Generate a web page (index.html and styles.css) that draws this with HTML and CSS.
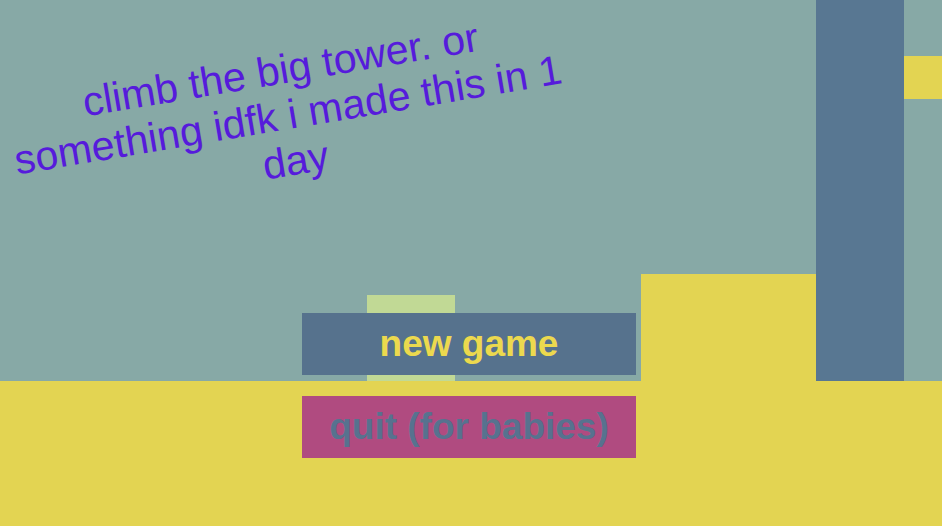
FILE: index.html
```html
<!DOCTYPE html>
<html lang="en">
<head>
    <meta charset="UTF-8">
    <meta name="viewport" content="width=device-width, initial-scale=1.0">
    <title>climb the big tower</title>
    <link rel="stylesheet" href="styles.css">
</head>
<body>
    <div class="scene">
        <!-- level blocks -->
        <div class="block floor"></div>
        <div class="block crate"></div>
        <div class="block step"></div>
        <div class="block tower"></div>
        <div class="block ledge"></div>

        <h1 class="title">climb the big tower. or something idfk i made this in 1 day</h1>

        <div class="menu">
            <button class="btn btn-new">new game</button>
            <button class="btn btn-quit">quit (for babies)</button>
        </div>
    </div>
</body>
</html>
```

FILE: styles.css
```css
body {
    margin: 0;
    overflow: hidden;
    font-family: "Liberation Sans", Arial, sans-serif;
}

.scene {
    position: relative;
    width: 942px;
    height: 526px;
    background-color: #87a9a6;
    overflow: hidden;
}

.block {
    position: absolute;
}

.floor {
    left: 0;
    top: 381px;
    width: 942px;
    height: 145px;
    background-color: #e3d452;
}

.crate {
    left: 367px;
    top: 295px;
    width: 88px;
    height: 86px;
    background-color: #c1d995;
}

.step {
    left: 641px;
    top: 274px;
    width: 175px;
    height: 107px;
    background-color: #e3d452;
}

.tower {
    left: 816px;
    top: 0;
    width: 88px;
    height: 381px;
    background-color: #587792;
}

.ledge {
    left: 904px;
    top: 56px;
    width: 38px;
    height: 43px;
    background-color: #e3d452;
}

.title {
    position: absolute;
    left: -2px;
    top: 46px;
    width: 580px;
    margin: 0;
    color: #561bdb;
    font-size: 41.2px;
    font-weight: normal;
    line-height: 46px;
    text-align: center;
    transform: rotate(-9.5deg);
}

.menu {
    position: absolute;
    left: 302px;
    top: 313px;
    display: flex;
    flex-direction: column;
    gap: 21px;
}

.btn {
    width: 334px;
    height: 62px;
    padding: 0;
    border: none;
    font-family: "Liberation Sans", Arial, sans-serif;
    font-size: 37px;
    font-weight: bold;
    cursor: pointer;
}

.btn-new {
    background-color: #56728d;
    color: #ecd94e;
}

.btn-quit {
    background-color: #b04b80;
    color: #57728f;
}
```
